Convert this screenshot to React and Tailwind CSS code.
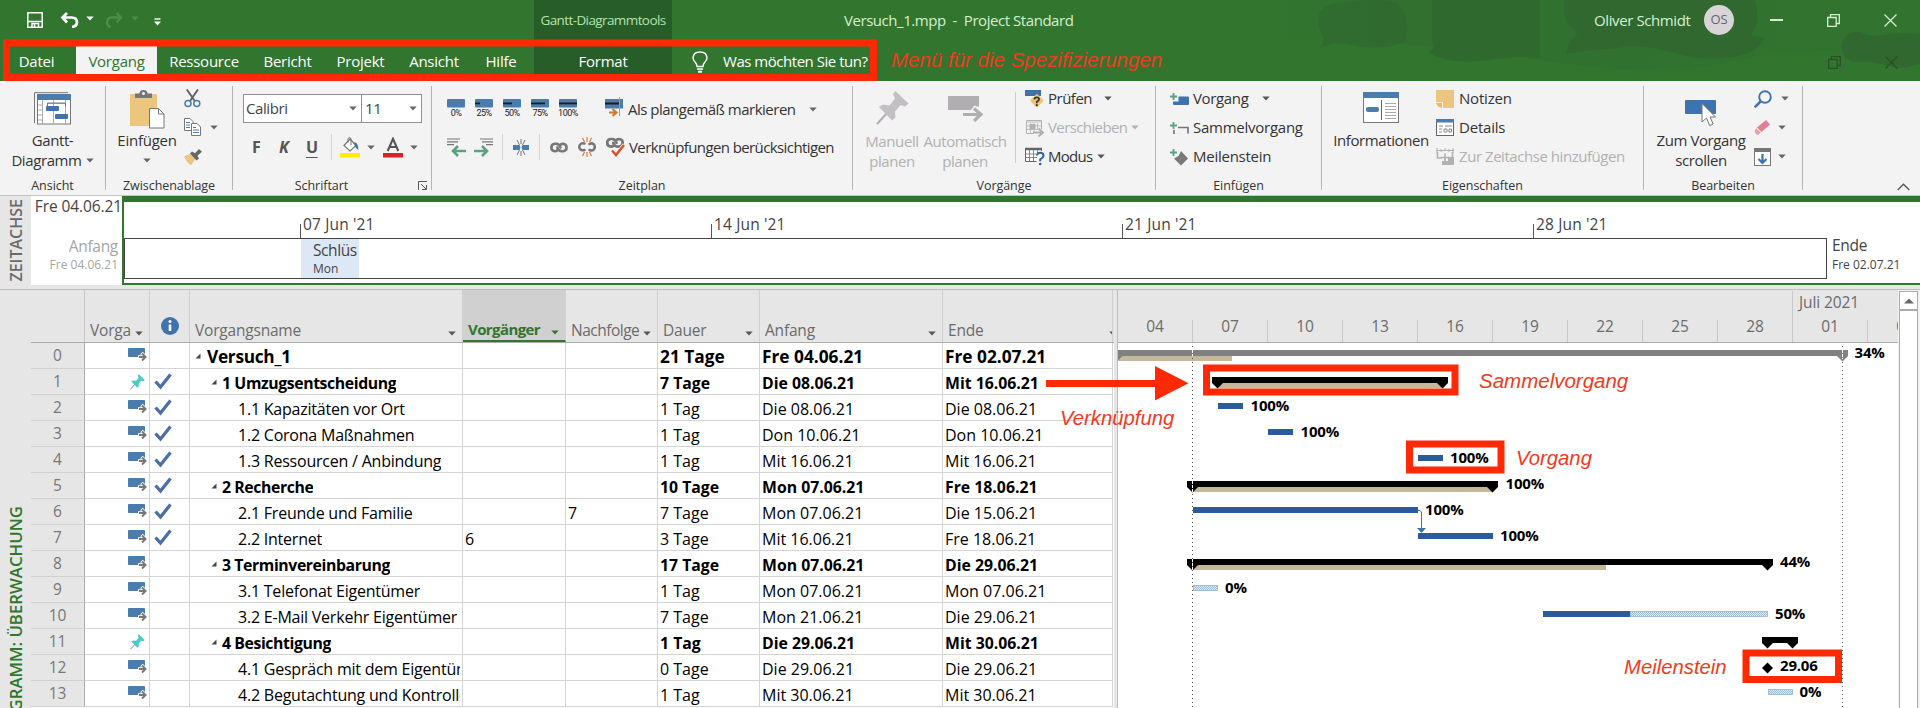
import React from "react";

const UI = "font-['Open_Sans','Noto_Sans',sans-serif]";

/* ---------- small shared pieces ---------- */
function Caret({ className = "", color = "#666" }) {
  return (
    <svg width="8" height="5" viewBox="0 0 8 5" className={"shrink-0 " + className}>
      <path d="M0.3 0.5h7.4L4 4.6z" fill={color} />
    </svg>
  );
}

function Group({ width, label, children }) {
  return (
    <section className={"flex h-[114px] shrink-0 flex-col " + width}>
      <div className="flex h-[94px] shrink-0">{children}</div>
      <div className="h-[20px] text-center text-[12.5px] leading-[21px] tracking-[-0.05px] text-[#333]">{label}</div>
    </section>
  );
}

function Sep() {
  return <div className="mt-[5px] h-[104px] w-px shrink-0 bg-[#b4b4b4]" />;
}

function Item({ icon, children, caret, muted, tight = "tracking-[-0.35px]", gap = "ml-3" }) {
  return (
    <div className={"flex h-[29px] items-center whitespace-nowrap text-[15px] " + (muted ? "text-[#b1b1b1]" : "text-[#333]")}>
      <span className="flex w-[23px] shrink-0">{icon}</span>
      <span className={tight}>{children}</span>
      {caret && <Caret className={gap} color={muted ? "#b1b1b1" : "#555"} />}
    </div>
  );
}

/* ---------- ribbon icons ---------- */
const IconGantt = () => (
  <svg width="37" height="33" viewBox="0 0 37 33">
    <path d="M0.5 31V0.7H34" fill="none" stroke="#777" />
    <rect x="3.5" y="2.5" width="33" height="29.5" fill="#fff" stroke="#777" />
    <rect x="3" y="2" width="34" height="6" fill="#4a7dae" />
    <path d="M4 13h4M4 18h4M4 23h4M4 28h4M8.5 8v24M19.5 8v24M31.5 8v24M14 11.5h18" stroke="#aaa" fill="none" />
    <path d="M13.5 14v-3h18v3" fill="none" stroke="#777" />
    <rect x="12" y="14" width="13" height="5" rx="1" fill="#3f73b0" />
    <rect x="21" y="22" width="13" height="5" rx="1" fill="#3f73b0" />
  </svg>
);
const IconPaste = () => (
  <svg width="35" height="39" viewBox="0 0 35 39">
    <rect x="0" y="4" width="27" height="32" fill="#ecc57e" />
    <path d="M5 8V3.5h4.500Q9.500 0 13.500 0t4 3.500H22V8z" fill="#777" />
    <circle cx="13.500" cy="3.500" r="1.500" fill="#f3f3f3" />
    <path d="M19.500 18.500h9l5.500 5.500v14H19.500z" fill="#fff" stroke="#777" />
    <path d="M28.500 18.500V24H34" fill="none" stroke="#777" />
  </svg>
);
const IconCut = () => (
  <svg width="17" height="19" viewBox="0 0 17 19" fill="none">
    <path d="M2.800 0.500 10.800 12M14 0.500 6 12" stroke="#666" strokeWidth="2" />
    <circle cx="4" cy="14.500" r="3" stroke="#4a7dae" strokeWidth="1.500" />
    <circle cx="12.800" cy="14.500" r="3" stroke="#4a7dae" strokeWidth="1.500" />
  </svg>
);
const IconCopy = () => (
  <svg width="17" height="18" viewBox="0 0 17 18" fill="#fff" stroke="#777">
    <path d="M0.500 0.500h5.500l3 3v9H0.500z" />
    <path d="M2 4.500h4M2 7h4M2 9.500h4" stroke="#4a7dae" />
    <path d="M7.500 5.500h5.500l3.500 3.500v8.500H7.500z" />
    <path d="M9 9.500h3M9 12h6M9 14.500h6" stroke="#4a7dae" />
  </svg>
);
const IconBrush = () => (
  <svg width="18" height="16" viewBox="0 0 18 16">
    <path d="M0 7.500 6 5l5.500 5L7 16Q3 14 0 7.500z" fill="#ecc57e" />
    <path d="M6 4.500 8 2.500l3 1.800L15 0l3 2.800-4.600 4L15 9.500l-2.500 2z" fill="#666" />
  </svg>
);
const IconBucket = () => (
  <svg width="21" height="21" viewBox="0 0 21 21">
    <rect x="0" y="16" width="20" height="4.500" fill="#ffed00" />
    <path d="M4 8.500 10 2l6 6.500-6 5.500z" fill="#fff" stroke="#777" strokeWidth="1.200" />
    <path d="M8 5.500V1.500q1.500-2 3 0V8" fill="none" stroke="#777" />
    <path d="M14.500 5q4 1 3.800 8-2.500-1-3.800-5z" fill="#3f73b0" />
  </svg>
);
const IconFontColor = () => (
  <svg width="20" height="21" viewBox="0 0 20 21">
    <rect x="0" y="16" width="20" height="4.500" fill="#d3242b" />
    <path d="M4.700 14 10 1.800 15.300 14M6.500 10h7" fill="none" stroke="#555" strokeWidth="2.100" />
  </svg>
);
const IconLauncher = () => (
  <svg width="10" height="10" viewBox="0 0 10 10" fill="none" stroke="#555">
    <path d="M0.500 9V0.500H9M3 3l5 5M8.500 4v4.500H4" />
  </svg>
);
function IconPercent({ label, done }) {
  return (
    <span className="flex w-[28px] shrink-0 flex-col">
      <svg width="18" height="9" viewBox="0 0 18 9" className="shrink-0">
        <rect width="18" height="8.500" rx="1" fill="#4a7dae" />
        <rect y="3.500" width={done} height="1.800" fill="#1c1c1c" />
      </svg>
      <span className="flex h-[11px] w-[18px] justify-center font-['Roboto',sans-serif] text-[9px] leading-[11px] tracking-[-0.5px] whitespace-nowrap text-[#222]">{label}</span>
    </span>
  );
}
const IconOnTrack = () => (
  <svg width="19" height="20" viewBox="0 0 19 20">
    <rect y="2" width="18" height="9.500" fill="#4a7dae" />
    <path d="M0 6.500h15" stroke="#1c1c1c" strokeWidth="2" />
    <path d="M14.500 0v19" stroke="#c89468" />
    <path d="M4 15.500h7M7.500 12l4 3.500-4 3.500" fill="none" stroke="#d17a2b" strokeWidth="2.200" />
  </svg>
);
const IconOutdent = () => (
  <svg width="19" height="19" viewBox="0 0 19 19" fill="none">
    <path d="M0 1h13M0 3.800h11M0 6.600h7" stroke="#777" strokeWidth="1.200" />
    <path d="M19 13H6M11 8 6 13l5 5" stroke="#5ba283" strokeWidth="2.600" />
  </svg>
);
const IconIndent = () => (
  <svg width="19" height="19" viewBox="0 0 19 19" fill="none">
    <path d="M6 1h13M8 3.800h11M12 6.600h7" stroke="#777" strokeWidth="1.200" />
    <path d="M0 13h13M8 8l5 5-5 5" stroke="#5ba283" strokeWidth="2.600" />
  </svg>
);
const IconSplit = () => (
  <svg width="16" height="17" viewBox="0 0 16 17">
    <path d="M8 0v5M8 12v5M4 1l2.500 5M12 1 9.500 6M4 16l2.500-5M12 16l-2.500-5" stroke="#777" />
    <path d="M0 6h6.500l1 2.500-1 2.500H0zM16 6H9.500l-1 2.500 1 2.500H16z" fill="#4a7dae" />
  </svg>
);
const ChainPath = () => (
  <g fill="none" stroke="#777" strokeWidth="2.700" strokeLinecap="round">
    <path d="M10.500 5Q9.500 1.200 6 1.200H4.800Q1.200 1.500 1.200 5t3.600 3.800q1.700 0 2.500-.8" />
    <path d="M7.300 5q1 3.800 4.500 3.800h1.400q3.500-.3 3.500-3.800t-3.500-3.800q-1.700 0-2.400.7" />
  </g>
);
const IconLink = () => (
  <svg width="18" height="11" viewBox="-0.200 -0.500 18.400 11"><ChainPath /></svg>
);
const IconUnlink = () => (
  <svg width="18" height="20" viewBox="0 0 18 20">
    <g fill="none" stroke="#777" strokeWidth="2.500" strokeLinecap="round">
      <path d="M6.500 6.500Q3 5.500 1.800 8t.2 4q2 2 4.500 1" />
      <path d="M11.500 13q3.500 1.500 4.700-1t-.2-4.500Q13.500 5.500 11.500 7" />
    </g>
    <path d="M9 0v5M9 15v5M4.500 1l2 4M13.500 1l-2 4M4.500 19l2-4M13.500 19l-2-4" stroke="#df7b3c" strokeWidth="1.200" />
  </svg>
);
const IconRespect = () => (
  <svg width="20" height="20" viewBox="0 0 20 20">
    <g transform="translate(0 0.800)"><ChainPath /></g>
    <path d="M5 13 10 18.500 18.500 8" fill="none" stroke="#f3f3f3" strokeWidth="4.500" />
    <path d="M6 13.500 10 18 18 8" fill="none" stroke="#d9522c" strokeWidth="2.500" />
  </svg>
);
function Pin({ w, h, fill, stem }) {
  return (
    <svg width={w} height={h} viewBox="0 0 33 34">
      <path d="M1 33 13 20" stroke={stem} strokeWidth="2" />
      <path d="M19.500 0 32.500 12.500 29 15.500 24.500 14 19 20.500 19.500 26.500 16 29.500 3 16 7 13.500 13.500 14.500 19 7.500 17 3z" fill={fill} />
    </svg>
  );
}
const IconAuto = () => (
  <svg width="35" height="26" viewBox="0 0 35 26">
    <path d="M0 0h31v10.500h-6v3.500H0z" fill="#b0aeb0" />
    <path d="M14 18.500h17M25 11.500l7.500 7-7.500 7" fill="none" stroke="#f3f3f3" strokeWidth="6" />
    <path d="M15 18.500h17M26 12.500l7 6-7 6.500" fill="none" stroke="#b0aeb0" strokeWidth="3.200" />
  </svg>
);
const IconInspect = () => (
  <svg width="20" height="20" viewBox="0 0 20 20">
    <path d="M0 1h16v6H0z" fill="#3f73b0" />
    <rect x="6.500" y="6.500" width="10" height="10" rx="1.500" transform="rotate(45 11.500 12)" fill="#f0c274" />
    <path d="M9.300 10.300q.3-2 2.500-2t2.300 2q0 1.300-2.300 2.500v1.400" fill="none" stroke="#333" strokeWidth="1.700" />
    <circle cx="11.800" cy="16.200" r="1.100" fill="#333" />
  </svg>
);
const IconMove = () => (
  <svg width="20" height="18" viewBox="0 0 20 18" fill="none" stroke="#b1b1b1">
    <path d="M16.500 10V1.500H1.500v13H9" />
    <path d="M1 3h16M2 7h14M2 10.500h10M5.500 4v10M9 4v10M12.500 4v7" strokeWidth=".8" />
    <rect x="5" y="5.500" width="5" height="4" fill="#b1b1b1" />
    <path d="M8 13.500h9M13.500 9.500l4.500 4-4.500 4" strokeWidth="2" />
  </svg>
);
const IconMode = () => (
  <svg width="20" height="19" viewBox="0 0 20 19" fill="none">
    <path d="M16.500 4V1.500H0.500v13h11" stroke="#666" fill="#fff" />
    <path d="M0 2h17" stroke="#666" strokeWidth="2.500" />
    <path d="M1 7h10M1 10.500h11M4.500 3v11M8.500 3v11M12.500 3v3" stroke="#888" />
    <path d="M12 8.500q.3-2.700 3.200-2.700 3.300 0 3.300 2.800 0 2-3.300 3.700v2" stroke="#35629b" strokeWidth="2" />
    <circle cx="15.200" cy="17" r="1.300" fill="#35629b" />
  </svg>
);
const Plus = () => <path d="M0 4.500h7M3.500 1v7" stroke="#5ba283" strokeWidth="1.800" fill="none" />;
const IconTask = () => (
  <svg width="19" height="14" viewBox="0 0 19 14"><path d="M8.500 4.500H18q1 0 1 1V12q0 1-1 1H4q-1 0-1-1V9.500h5.500z" fill="#3f73b0" /><Plus /></svg>
);
const IconSummary = () => (
  <svg width="19" height="14" viewBox="0 0 19 14"><path d="M8 6.500h10v6M4 9v4" fill="none" stroke="#777" strokeWidth="1.700" /><Plus /></svg>
);
const IconMilestone = () => (
  <svg width="19" height="18" viewBox="0 0 19 18"><path d="M11 3l7 7.500-7 7-7-7L8.500 8z" fill="#7a787a" /><Plus /></svg>
);
const IconInfo = () => (
  <svg width="36" height="31" viewBox="0 0 36 31">
    <rect x="0.500" y="0.500" width="35" height="30" fill="#fff" stroke="#777" />
    <rect width="36" height="6" fill="#4a7dae" />
    <rect x="3" y="15" width="13" height="5" rx="2" fill="#4a7dae" />
    <path d="M18.500 8v20" stroke="#666" />
    <path d="M22 11.500h11M22 14.500h11M22 17.500h11M22 20.500h11M22 23.500h11M22 26.500h11" stroke="#aaa" />
  </svg>
);
const IconNote = () => (
  <svg width="18" height="18" viewBox="0 0 18 18">
    <path d="M0 0h18v18H7v-6H0z" fill="#ecc57e" />
    <path d="M0 13h6v5q-5-1-6-5z" fill="#f1b95a" />
  </svg>
);
const IconDetails = () => (
  <svg width="18" height="17" viewBox="0 0 18 17">
    <rect x="0.500" y="0.500" width="17" height="16" fill="#fff" stroke="#666" />
    <rect width="18" height="3.500" fill="#4a7dae" />
    <path d="M3 7h4M9 7h7M3 10h3M3 13h3M8 10h3v3H8zM13 10h2.500v3H13z" fill="none" stroke="#888" />
  </svg>
);
const IconTimeline = () => (
  <svg width="18" height="17" viewBox="0 0 18 17" fill="none" stroke="#b1b1b1">
    <path d="M0 2.500h18M1 0v5M5 1v3M9 0v3M13 1v3M17 0v5" />
    <path d="M1.500 4v6H6M16.500 4v5M5 9.500h8M9 5.500V13" strokeWidth="1.600" />
    <path d="M12 9h6v8H6v-4h6z" fill="#b1b1b1" stroke="none" />
  </svg>
);
const IconScroll = () => (
  <svg width="32" height="27" viewBox="0 0 32 27">
    <rect width="31" height="14" rx="1" fill="#3f73b0" />
    <path d="M17 3.500v18.500l4.500-4 3.200 7.500 3.500-1.500-3.200-7h5.500z" fill="#fff" stroke="#777" />
  </svg>
);
const IconFind = () => (
  <svg width="18" height="18" viewBox="0 0 18 18" fill="none" stroke="#3f73b0">
    <circle cx="11" cy="7" r="5.800" strokeWidth="1.900" />
    <path d="M7 11 0.800 17.200" strokeWidth="2.600" />
  </svg>
);
const IconErase = () => (
  <svg width="18" height="16" viewBox="0 0 18 16">
    <path d="M12 0l4 4.500-8.500 7.500-4.500-4.500z" fill="#e07f90" />
    <path d="M2.300 8.300 6.700 12.600 4 15Q1 14 0.500 11z" fill="#e8a0ac" />
  </svg>
);
const IconFill = () => (
  <svg width="17" height="18" viewBox="0 0 17 18">
    <rect x="0.500" y="0.500" width="16" height="17" fill="#fff" stroke="#777" />
    <rect width="17" height="4" fill="#777" />
    <path d="M8.500 6v9M4.500 11l4 4 4-4" fill="none" stroke="#3f73b0" strokeWidth="2.200" />
  </svg>
);

/* ---------- title bar and tabs ---------- */
const TABS = [
  ["Datei", "w-[76px] pr-[3px]", ""],
  ["Vorgang", "w-[81px]", "bg-[#f3f3f3] text-[#31752f]"],
  ["Ressource", "w-[94px]", ""],
  ["Bericht", "w-[73px]", ""],
  ["Projekt", "w-[73px]", ""],
  ["Ansicht", "w-[74px]", ""],
  ["Hilfe", "w-[63px] pr-[3px]", ""],
  ["Format", "w-[138px]", ""],
];

function Restore({ color }) {
  return (
    <svg width="13" height="13" viewBox="0 0 13 13" fill="none" stroke={color} strokeWidth="1.300">
      <path d="M0.700 3.500h8.500v8.800H0.700zM3.500 3.500V0.700h8.800v8.800H9.500" />
    </svg>
  );
}
function Cross({ color }) {
  return (
    <svg width="13" height="13" viewBox="0 0 13 13" stroke={color} strokeWidth="1.300">
      <path d="M0.500 0.500l12 12M12.500 0.500l-12 12" />
    </svg>
  );
}

function TitleBar() {
  return (
    <header className="relative h-[81px] shrink-0 overflow-hidden bg-[#31752f]">
      <svg className="absolute top-0 right-0" width="640" height="81" viewBox="1280 0 640 81">
        <defs>
          <linearGradient id="shade" x1="0" y1="0" x2="1" y2="0">
            <stop offset="0" stopColor="#31752f" />
            <stop offset=".2" stopColor="#31702f" />
            <stop offset="1" stopColor="#31732f" />
          </linearGradient>
        </defs>
        <path d="M1280 0h640v60q-100-20-180 0t-200 0-260-20z" fill="url(#shade)" />
        <g fill="#30682f">
          <path d="M1328 5q40-8 68-3 14 10 10 40-30 10-60 2-15-2-26 4 6-10 2-14-10-20 6-29z" opacity=".7" />
          <path d="M1432 0h108v58q-30-2-50 2-40 6-62-8 8-2 4-12z" opacity=".9" />
          <path d="M1565 0h190q6 20-4 36 12 0 13 2-6 14-26 18-30 6-60-2-40-12-60-6-30 2-52 6 2-14 12-20-18-14-13-34z" />
          <path d="M1842 44q4-14 18-12 8 4 16 4 24-4 44-2v30q-14 4-24 4-24-8-44-6-12-6-10-18z" />
        </g>
      </svg>
      <div className="relative flex h-[40px] text-[15px] text-[#d5f0d0]">
        <div className="flex w-[534px] items-center pl-[27px]">
          <svg width="16" height="16" viewBox="0 0 16 16" fill="none" stroke="#fff" strokeWidth="1.500" className="mb-px">
            <path d="M0.800 0.800h14.400v14.400H0.800zM1 9.500h14" />
            <path d="M5 15v-3.500h6.500V15M7.500 12v3" />
          </svg>
          <svg width="19" height="16" viewBox="0 0 19 16" fill="none" stroke="#fff" strokeWidth="2.700" className="ml-[17px]">
            <path d="M7 1 2.500 5.500l4.500 5M3 5.500h8.500q5.500 0 5.500 5-.5 4-5 4.500" />
          </svg>
          <Caret className="mb-1 ml-[7px]" color="#fff" />
          <svg width="18" height="16" viewBox="0 0 18 16" fill="none" stroke="#4d8e4b" strokeWidth="2.300" className="ml-[11px]">
            <path d="M11.500 1 16 5.500l-4.500 5M15.500 5.500H7q-5 0-5 5 .5 4 4 4.500" />
          </svg>
          <Caret className="mb-1 ml-[8px]" color="#4d8e4b" />
          <svg width="7" height="8" viewBox="0 0 7 8" className="mt-1 ml-[15px]">
            <path d="M0.500 1h6" stroke="#fff" strokeWidth="1.400" />
            <path d="M0 3.500h7L3.500 7.500z" fill="#fff" />
          </svg>
        </div>
        <div className="flex w-[138px] items-center justify-center bg-[#275d28] text-[13.5px] tracking-[-0.6px] text-[#b5e2ac]">Gantt-Diagrammtools</div>
        <div className="flex w-[570px] items-center pl-[172px] tracking-[-0.45px] whitespace-pre">Versuch_1.mpp  -  Project Standard</div>
        <div className="flex flex-1 items-center">
          <span className="ml-[352px] w-[98px] tracking-[-0.4px] whitespace-nowrap">Oliver Schmidt</span>
          <span className="ml-[12px] flex h-[30px] w-[30px] items-center justify-center rounded-full bg-[#d8d5d8] text-[13px] text-[#666]">OS</span>
          <span className="ml-[36px] h-[1.500px] w-[13px] bg-[#d5f0d0]" />
          <span className="ml-[44px]"><Restore color="#d5f0d0" /></span>
          <span className="ml-[44px]"><Cross color="#d5f0d0" /></span>
        </div>
      </div>
      <nav className="relative flex h-[41px] text-[15px] text-white">
        {TABS.map(([t, w, c]) => (
          <div key={t} className={"flex shrink-0 " + w + (t === "Format" ? " bg-[#275d28]" : "")}>
            <span className={"mt-[5px] flex w-full items-center justify-center pb-[4px] tracking-[-0.25px] " + c}>{t}</span>
          </div>
        ))}
        <svg width="16" height="22" viewBox="0 0 16 22" fill="none" stroke="#fff" strokeWidth="1.400" className="mt-[11px] ml-[20px]">
          <path d="M5 15.500q0-2.500-2-4.500-2-2-2-4.200Q1.500 1 8 1t7 5.800q0 2.200-2 4.200-2 2-2 4.500zM5 18h6" />
          <path d="M6 20.700h4" strokeWidth="2" />
        </svg>
        <span className="mt-[10px] ml-[15px] w-[148px] leading-[22px] tracking-[-0.47px] whitespace-nowrap">Was möchten Sie tun?</span>
        <span className="mt-[16px] ml-[957px]"><Restore color="#2b4f2a" /></span>
        <span className="mt-[16px] ml-[44px]"><Cross color="#2b4f2a" /></span>
      </nav>
    </header>
  );
}

/* ---------- ribbon ---------- */
function Ribbon() {
  return (
    <div className="flex h-[115px] shrink-0 border-b border-[#c6c6c6] bg-[#f3f3f3] text-[15px] tracking-[-0.4px] text-[#333]">
      <Group width="w-[105px]" label="Ansicht">
        <div className="flex w-full flex-col items-center pt-[11px] leading-[20px]">
          <IconGantt />
          <span className="mt-[5px]">Gantt-</span>
          <span className="flex items-center gap-[4px]">Diagramm <Caret /></span>
        </div>
      </Group>
      <Sep />
      <Group width="w-[126px]" label="Zwischenablage">
        <div className="ml-[11px] flex w-[60px] flex-col items-center pt-[9px] leading-[20px] tracking-[-0.25px]">
          <IconPaste />
          <span className="mt-px">Einfügen</span>
          <Caret className="mt-[8px]" />
        </div>
        <div className="ml-[7px] flex flex-col pt-[8px]">
          <IconCut />
          <span className="mt-[10px] flex items-center gap-[9px]"><IconCopy /><Caret /></span>
          <span className="mt-[13px]"><IconBrush /></span>
        </div>
      </Group>
      <Sep />
      <Group width="w-[198px]" label={<span className="flex"><span className="w-[177px]">Schriftart</span><span className="mt-[6px] ml-[8px]"><IconLauncher /></span></span>}>
        <div className="flex flex-col pl-[10px]">
          <div className="mt-[13px] flex h-[29px] w-[179px] border border-[#919191] bg-white leading-[27px] text-[#444]">
            <div className="flex w-[118px] items-center justify-between border-r border-[#919191] pr-[4px] pl-[2px]">Calibri<Caret /></div>
            <div className="flex flex-1 items-center justify-between pr-[4px] pl-[3px]">11<Caret /></div>
          </div>
          <div className="mt-[11px] flex h-[26px] items-center text-[16px] font-bold text-[#555]">
            <span className="w-[32px] pl-[9px]">F</span>
            <span className="w-[28px] pl-[4px] italic">K</span>
            <span className="w-[28px] pl-[3px] underline underline-offset-4">U</span>
            <span className="mr-[8px] h-[26px] w-px bg-[#d4d4d4]" />
            <IconBucket />
            <Caret className="mr-[8px] ml-[6px]" />
            <IconFontColor />
            <Caret className="ml-[7px]" />
          </div>
        </div>
      </Group>
      <Sep />
      <Group width="w-[420px]" label="Zeitplan">
        <div className="flex flex-col pl-[15px]">
          <div className="flex h-[41px] pt-[18px]">
            <IconPercent label="0%" done={0} />
            <IconPercent label="25%" done={5} />
            <IconPercent label="50%" done={9} />
            <IconPercent label="75%" done={14} />
            <IconPercent label="100%" done={18} />
            <span className="-mt-[3px] ml-[18px] flex h-[26px] w-[23px] pt-px"><IconOnTrack /></span>
            <span className="-mt-[3px] w-[177px] leading-[26px] tracking-[-0.5px] whitespace-nowrap">Als plangemäß markieren</span>
            <Caret className="mt-[8px] ml-[4px]" />
          </div>
          <div className="mt-[12px] flex h-[26px] items-center">
            <IconOutdent />
            <span className="ml-[8px]"><IconIndent /></span>
            <span className="ml-[9px] h-[26px] w-px bg-[#d4d4d4]" />
            <span className="ml-[10px]"><IconSplit /></span>
            <span className="ml-[10px] h-[26px] w-px bg-[#d4d4d4]" />
            <span className="ml-[10px]"><IconLink /></span>
            <span className="ml-[10px]"><IconUnlink /></span>
            <span className="ml-[10px]"><IconRespect /></span>
            <span className="ml-[3px] tracking-[-0.6px] whitespace-nowrap">Verknüpfungen berücksichtigen</span>
          </div>
        </div>
      </Group>
      <Sep />
      <Group width="w-[302px]" label="Vorgänge">
        <div className="ml-[6px] flex w-[66px] flex-col items-center pt-[10px] text-center leading-[20px] text-[#b1b1b1]">
          <Pin w={33} h={34} fill="#c2c0c2" stem="#b0aeb0" />
          <span className="mt-[6px]">Manuell</span>
          <span>planen</span>
        </div>
        <div className="flex w-[80px] flex-col items-center pt-[15px] text-center leading-[20px] tracking-[-0.45px] text-[#b1b1b1]">
          <IconAuto />
          <span className="mt-[9px]">Automatisch</span>
          <span>planen</span>
        </div>
        <div className="mt-[11px] ml-[10px] h-[71px] w-px bg-[#cfcfcf]" />
        <div className="ml-[9px] flex flex-col pt-[3px]">
          <Item icon={<IconInspect />} caret tight="tracking-[-0.5px]">Prüfen</Item>
          <Item icon={<IconMove />} caret muted gap="ml-1" tight="tracking-[-0.6px]">Verschieben</Item>
          <Item icon={<IconMode />} caret gap="ml-1" tight="tracking-[-0.7px]">Modus</Item>
        </div>
      </Group>
      <Sep />
      <Group width="w-[165px]" label="Einfügen">
        <div className="ml-[14px] flex flex-col pt-[3px]">
          <Item icon={<IconTask />} caret gap="ml-[14px]">Vorgang</Item>
          <Item icon={<IconSummary />} tight="tracking-[-0.25px]">Sammelvorgang</Item>
          <Item icon={<IconMilestone />} tight="tracking-[-0.25px]">Meilenstein</Item>
        </div>
      </Group>
      <Sep />
      <Group width="w-[321px]" label="Eigenschaften">
        <div className="ml-[12px] flex w-[94px] flex-col items-center pt-[11px] leading-[20px]">
          <IconInfo />
          <span className="mt-[7px]">Informationen</span>
        </div>
        <div className="ml-[8px] flex flex-col pt-[3px]">
          <Item icon={<IconNote />} tight="tracking-[-0.2px]">Notizen</Item>
          <Item icon={<IconDetails />} tight="tracking-[-0.2px]">Details</Item>
          <Item icon={<IconTimeline />} muted tight="tracking-[-0.45px]">Zur Zeitachse hinzufügen</Item>
        </div>
      </Group>
      <Sep />
      <Group width="w-[158px]" label="Bearbeiten">
        <div className="ml-[11px] flex w-[92px] flex-col items-center pt-[19px] text-center leading-[20px]">
          <IconScroll />
          <span className="mt-[3px] whitespace-nowrap">Zum Vorgang</span>
          <span>scrollen</span>
        </div>
        <div className="ml-[7px] flex flex-col pt-[3px]">
          <span className="flex h-[29px] items-center gap-[9px]"><IconFind /><Caret /></span>
          <span className="flex h-[29px] items-center gap-[6px]"><IconErase /><Caret /></span>
          <span className="flex h-[29px] items-center gap-[7px]"><IconFill /><Caret /></span>
        </div>
      </Group>
      <Sep />
      <svg width="13" height="8" viewBox="0 0 13 8" className="mt-[102px] ml-[94px]" fill="none" stroke="#555" strokeWidth="1.300">
        <path d="M0.700 7 6.500 1.200 12.300 7" />
      </svg>
    </div>
  );
}

/* ---------- timeline ---------- */
function Timeline() {
  return (
    <div className="flex h-[94px] shrink-0 border-b border-[#bdbdbd] bg-[#e6e6e6]">
      <div className="flex h-[89px] w-[31px] shrink-0 items-center justify-center">
        <span className="rotate-180 text-[16px] leading-[22px] font-semibold text-[#6a6a6a] [writing-mode:vertical-rl]">ZEITACHSE</span>
      </div>
      <div className="flex h-[89px] w-[91px] shrink-0 flex-col items-end bg-white whitespace-nowrap">
        <span className="text-[15.5px] leading-[20px] tracking-[-0.1px] text-[#444]">Fre 04.06.21</span>
        <span className="mt-[20px] pr-[4px] text-[15.5px] leading-[20px] tracking-[-0.3px] text-[#a5a5a5]">Anfang</span>
        <span className="pr-[4px] text-[12px] leading-[18px] text-[#a5a5a5]">Fre 04.06.21</span>
      </div>
      <div className="flex h-[89px] min-w-0 flex-1 flex-col overflow-hidden border-t-[6px] border-b-2 border-l-2 border-[#31752f] bg-white">
        <div className="flex h-[36px] items-end pl-[176px] text-[15.5px] text-[#444]">
          {["07 Jun '21", "14 Jun '21", "21 Jun '21", "28 Jun '21"].map((d) => (
            <span key={d} className="flex w-[411px] shrink-0 items-end">
              <span className="h-[14px] w-px bg-[#555]" />
              <span className="pb-[4px] pl-[2px] leading-[20px] tracking-[0.15px]">{d}</span>
            </span>
          ))}
        </div>
        <div className="flex h-[41px]">
          <div className="flex w-[1703px] shrink-0 border border-[#444] pl-[176px]">
            <div className="flex w-[58px] flex-col bg-[#dde8f6] pl-[12px] text-[#444]">
              <span className="mt-[1px] text-[15.5px] leading-[20px] tracking-[-0.4px]">Schlüs</span>
              <span className="text-[12px] leading-[17px]">Mon</span>
            </div>
          </div>
          <div className="flex flex-col pl-[5px] whitespace-nowrap text-[#444]">
            <span className="-mt-[3px] text-[15.500px] leading-[20px] tracking-[-0.3px]">Ende</span>
            <span className="text-[12px] leading-[20px]">Fre 02.07.21</span>
          </div>
        </div>
      </div>
    </div>
  );
}

/* ---------- task table ---------- */
const TASKS = [
  [0, "auto", 0, 0, "Versuch_1", "", "", "21 Tage", "Fre 04.06.21", "Fre 02.07.21"],
  [1, "pin", 1, 1, "1 Umzugsentscheidung", "", "", "7 Tage", "Die 08.06.21", "Mit 16.06.21"],
  [2, "auto", 1, 2, "1.1 Kapazitäten vor Ort", "", "", "1 Tag", "Die 08.06.21", "Die 08.06.21"],
  [3, "auto", 1, 2, "1.2 Corona Maßnahmen", "", "", "1 Tag", "Don 10.06.21", "Don 10.06.21"],
  [4, "auto", 1, 2, "1.3 Ressourcen / Anbindung", "", "", "1 Tag", "Mit 16.06.21", "Mit 16.06.21"],
  [5, "auto", 1, 1, "2 Recherche", "", "", "10 Tage", "Mon 07.06.21", "Fre 18.06.21"],
  [6, "auto", 1, 2, "2.1 Freunde und Familie", "", "7", "7 Tage", "Mon 07.06.21", "Die 15.06.21"],
  [7, "auto", 1, 2, "2.2 Internet", "6", "", "3 Tage", "Mit 16.06.21", "Fre 18.06.21"],
  [8, "auto", 0, 1, "3 Terminvereinbarung", "", "", "17 Tage", "Mon 07.06.21", "Die 29.06.21"],
  [9, "auto", 0, 2, "3.1 Telefonat Eigentümer", "", "", "1 Tag", "Mon 07.06.21", "Mon 07.06.21"],
  [10, "auto", 0, 2, "3.2 E-Mail Verkehr Eigentümer", "", "", "7 Tage", "Mon 21.06.21", "Die 29.06.21"],
  [11, "pin", 0, 1, "4 Besichtigung", "", "", "1 Tag", "Die 29.06.21", "Mit 30.06.21"],
  [12, "auto", 0, 2, "4.1 Gespräch mit dem Eigentümer", "", "", "0 Tage", "Die 29.06.21", "Die 29.06.21"],
  [13, "auto", 0, 2, "4.2 Begutachtung und Kontrolle", "", "", "1 Tag", "Mit 30.06.21", "Mit 30.06.21"],
];

const AutoIcon = () => (
  <svg width="19" height="13" viewBox="0 0 19 13">
    <rect width="17" height="9" rx="0.800" fill="#4a7dae" />
    <path d="M10 9h7M13.500 5l4 4-4 4" fill="none" stroke="#fff" strokeWidth="3.500" />
    <path d="M11 9h6M14 5.500l3.500 3.500-3.500 3.500" fill="none" stroke="#777" strokeWidth="2" />
  </svg>
);
const Check = () => (
  <svg width="18" height="17" viewBox="0 0 18 17">
    <path d="M1.500 8.500 6.500 14 16.500 1.500" fill="none" stroke="#4c6ea8" strokeWidth="3.300" />
  </svg>
);
const Collapse = () => (
  <svg width="6" height="6" viewBox="0 0 6 6" className="shrink-0"><path d="M5.500 0.500v5H0.500z" fill="#444" /></svg>
);

function HeadCell({ w, children, caret = true, active, className = "" }) {
  return (
    <div className={"flex h-full shrink-0 items-end border-r border-[#d0d0d0] pr-[6px] pl-[5px] " + w + (active ? " border-b-2 border-b-[#31752f] bg-[#d0d0d0] pb-px text-[15px] font-bold tracking-[-0.6px] text-[#31752f]" : " pb-[2px]")}>
      <span className={"min-w-0 flex-1 leading-[20px] whitespace-nowrap " + className}>{children}</span>
      {caret && <Caret className="mb-[4px]" color={active ? "#31752f" : "#555"} />}
    </div>
  );
}

function TaskRow({ task }) {
  const [id, mode, done, level, name, pred, succ, dur, start, end] = task;
  const font = level === 0 ? " text-[17.3px] leading-[27px] font-bold" : level === 1 ? " font-bold text-[15.8px] leading-[28px]" : " text-[16px] leading-[28px]";
  const nameFont = level === 0 ? " ml-[6px] tracking-[-0.3px]" : level === 1 ? " ml-[5px] tracking-[-0.4px]" : " tracking-[-0.22px]";
  const pad = level === 0 ? " pl-[5px]" : level === 1 ? " pl-[21px]" : " pl-[48px]";
  const cell = "h-full shrink-0 overflow-hidden border-r border-b border-[#d4d4d4] pl-[2px] whitespace-nowrap ";
  return (
    <div className={"flex h-[26px] shrink-0 text-black" + font}>
      <div className="w-[54px] shrink-0 border-r border-b border-r-[#ababab] border-b-[#d0d0d0] bg-[#e6e6e6] text-center text-[15.500px] leading-[25px] font-normal text-[#777]">{id}</div>
      <div className={cell + "flex w-[65px] justify-end pt-[5px] pr-[2px]"}>
        {mode === "auto" ? <AutoIcon /> : <span className="mr-[2px]"><Pin w={15} h={16} fill="#4cc9c9" stem="#777" /></span>}
      </div>
      <div className={cell + "w-[40px] pt-[4px] !pl-[4px]"}>{done ? <Check /> : null}</div>
      <div className={"flex h-full w-[273px] shrink-0 items-start overflow-hidden border-r border-b border-[#d4d4d4] pr-[2px]" + pad}>
        {level < 2 && <span className="flex h-[25px] shrink-0 items-center"><Collapse /></span>}
        <span className={"overflow-hidden whitespace-nowrap" + nameFont}>{name}</span>
      </div>
      <div className={cell + "w-[103px]"}>{pred}</div>
      <div className={cell + "w-[92px]"}>{succ}</div>
      <div className={cell + "w-[102px]"}>{dur}</div>
      <div className={cell + "w-[183px]"}>{start}</div>
      <div className={cell + "w-[170px]"}>{end}</div>
    </div>
  );
}

function TaskTable() {
  return (
    <div className="flex w-[1083px] shrink-0 flex-col bg-white">
      <div className="flex h-[53px] shrink-0 border-b border-[#ababab] bg-[#e6e6e6] text-[15.5px] tracking-[-0.2px] text-[#6b6b6b]">
        <div className="w-[54px] shrink-0 border-r border-[#c6c6c6]" />
        <HeadCell w="w-[65px]">Vorga</HeadCell>
        <div className="flex w-[40px] shrink-0 justify-center border-r border-[#d0d0d0] pt-[27px]">
          <svg width="18" height="18" viewBox="0 0 18 18">
            <circle cx="9" cy="9" r="9" fill="#3f73b0" />
            <path d="M9 7.500V14" stroke="#fff" strokeWidth="2.600" />
            <circle cx="9" cy="4.500" r="1.500" fill="#fff" />
          </svg>
        </div>
        <HeadCell w="w-[273px]">Vorgangsname</HeadCell>
        <HeadCell w="w-[103px]" active>Vorgänger</HeadCell>
        <HeadCell w="w-[92px]" className="tracking-[-0.5px]">Nachfolge</HeadCell>
        <HeadCell w="w-[102px]">Dauer</HeadCell>
        <HeadCell w="w-[183px]">Anfang</HeadCell>
        <div className="flex h-full w-[170px] shrink-0 items-end overflow-hidden border-r border-[#d0d0d0] pb-[2px] pl-[5px]">
          <span className="w-[161px] shrink-0 leading-[20px]">Ende</span>
          <Caret className="mb-[4px]" color="#555" />
        </div>
      </div>
      {TASKS.map((t) => <TaskRow key={t[0]} task={t} />)}
    </div>
  );
}

/* ---------- gantt chart ---------- */
function Summary({ x1, x2, y, progress, color = "#000", left = true }) {
  const tip = (c) => `M${c - 5.500} ${y}h11v6l-5.500 5.500-5.500-5.500z`;
  return (
    <g>
      {progress && <rect x={left ? x1 + 5.500 : x1} y={y + 6} width={progress - x1 - (left ? 5.500 : 0)} height="5" fill="#c4b89a" />}
      <rect x={x1} y={y} width={x2 - x1} height="6" fill={color} />
      {left ? <path d={tip(x1 + 5.500)} fill={color} /> : <path d={`M${x1} ${y}v10.500l5-5z`} fill={color} />}
      <path d={tip(x2 - 5.500)} fill={color} />
    </g>
  );
}
const Bar = ({ x1, x2, y }) => <rect x={x1} y={y} width={x2 - x1} height="6" fill="#2a5c9c" />;
const Open = ({ x1, x2, y }) => <rect x={x1 + 0.500} y={y + 0.500} width={x2 - x1 - 1} height="5" fill="url(#hatch)" stroke="#8fb3d3" strokeWidth=".8" />;

const LABELS = [
  [1854.500, 358, "34%"], [1250.500, 411, "100%"], [1300.500, 437, "100%"], [1450, 463, "100%"],
  [1505.500, 489, "100%"], [1425, 515, "100%"], [1500, 541, "100%"], [1780, 567, "44%"],
  [1225, 593, "0%"], [1775, 619, "50%"], [1780, 671, "29.06"], [1799.500, 697, "0%"],
];

function Chart() {
  return (
    <svg width="781" height="365" viewBox="1118 343 781 365" className="shrink-0 bg-white">
      <defs>
        <pattern id="hatch" width="2" height="2" patternUnits="userSpaceOnUse">
          <rect width="2" height="2" fill="#dfeaf2" />
          <rect width="1" height="1" fill="#9dbdd6" />
          <rect x="1" y="1" width="1" height="1" fill="#9dbdd6" />
        </pattern>
      </defs>
      <Summary x1={1118} x2={1848} y={350} progress={1232} color="#808080" left={false} />
      <Summary x1={1212} x2={1448} y={377} progress={1443} />
      <Bar x1={1218} x2={1243} y={403} />
      <Bar x1={1268} x2={1293} y={429} />
      <Bar x1={1418} x2={1443} y={455} />
      <Summary x1={1187} x2={1498} y={481} progress={1493} />
      <Bar x1={1193} x2={1418} y={507} />
      <path d="M1418 510.500h2l1.500 1.500v18" fill="none" stroke="#3a74ae" />
      <path d="M1417 528h9l-4.500 5z" fill="#3a74ae" />
      <Bar x1={1418} x2={1493} y={533} />
      <Summary x1={1187} x2={1773} y={559} progress={1606} />
      <Open x1={1193} x2={1218} y={585} />
      <Bar x1={1543} x2={1630} y={611} />
      <Open x1={1630} x2={1768} y={611} />
      <Summary x1={1762} x2={1798} y={637} />
      <path d="M1767.500 662.500l5.500 5.500-5.500 5.500-5.500-5.500z" fill="#000" />
      <Open x1={1768} x2={1793} y={689} />
      <g strokeDasharray="1 3">
        <path d="M1192.500 346v362M1842.500 346v362" stroke="#555" />
        <path d="M1192.500 350v6M1192.500 481v11M1192.500 559v11M1842.500 350v9" stroke="#fff" strokeDasharray="3 1" />
      </g>
      {LABELS.map(([x, y, t]) => (
        <text key={x + t} x={x} y={y} className="font-['Open_Sans','Noto_Sans',sans-serif] text-[15px] font-bold tracking-[-0.2px]">{t}</text>
      ))}
    </svg>
  );
}

function GanttPane() {
  return (
    <div className="flex w-[781px] shrink-0 flex-col overflow-hidden border-l border-[#bdbdbd]">
      <div className="flex h-[53px] shrink-0 border-b border-[#ababab] bg-[#e6e6e6] text-[15.5px] text-[#6b6b6b]">
        {["04", "07", "10", "13", "16", "19", "22", "25", "28", "01", "04"].map((d, i) => (
          <div key={i} className={"flex h-full shrink-0 flex-col justify-end " + (i === 0 ? "w-[74px]" : "w-[75px]")}>
            {i === 9 && <div className="h-[29px] border-l border-[#c8c8c8] pl-[6px] leading-[22px] whitespace-nowrap tracking-[-0.1px]">Juli 2021</div>}
            <div className={"h-[22px] text-center leading-[13px] " + (i > 0 ? "border-l border-[#c8c8c8]" : "")}>{d}</div>
          </div>
        ))}
      </div>
      <Chart />
    </div>
  );
}

function Scrollbar() {
  return (
    <div className="flex flex-1 flex-col bg-[#f3f3f3] pt-px pl-px">
      <div className="flex w-[19px] flex-1 flex-col border border-b-0 border-[#ababab] bg-white">
        <div className="flex h-[19px] items-center justify-center border-b-2 border-[#ababab]">
          <svg width="10" height="6" viewBox="0 0 10 6"><path d="M0 5.500 5 0.500l5 5z" fill="#666" /></svg>
        </div>
      </div>
    </div>
  );
}

/* ---------- red annotations laid over the window ---------- */
const NOTES = [
  [891, 66.500, "Menü für die Spezifizierungen", "text-[20.5px]"],
  [1479, 387.500, "Sammelvorgang", "text-[20.500px]"],
  [1516, 464.500, "Vorgang", "text-[20.3px]"],
  [1624, 673.500, "Meilenstein", "text-[20.3px]"],
  [1060, 425, "Verknüpfung", "text-[20.3px]"],
];
function Annotations() {
  return (
    <svg className="pointer-events-none absolute top-0 left-0" width="1920" height="708" viewBox="0 0 1920 708">
      <g fill="none" stroke="#ff2a05" strokeWidth="7">
        <rect x="6.500" y="43" width="867" height="34.500" />
        <rect x="1206.500" y="368" width="248.500" height="24" />
        <rect x="1409.500" y="444" width="91.500" height="26" />
        <rect x="1746" y="653" width="92.500" height="26.500" />
      </g>
      <path d="M1046 380h109v-14l33.500 17.200-33.500 17.300V387h-109z" fill="#ff2a05" />
      {NOTES.map(([x, y, t, c]) => (
        <text key={t} x={x} y={y} fill="#f03a20" className={"font-['Liberation_Sans',sans-serif] italic " + c}>{t}</text>
      ))}
    </svg>
  );
}

export default function App() {
  return (
    <div className={"relative flex h-[708px] w-[1920px] flex-col overflow-hidden bg-[#e6e6e6] " + UI}>
      <TitleBar />
      <Ribbon />
      <Timeline />
      <main className="flex min-h-0 flex-1 overflow-hidden">
        <div className="flex w-[31px] shrink-0 justify-center overflow-hidden pt-[216px]">
          <span className="h-fit shrink-0 rotate-180 text-[16.8px] leading-[22px] font-semibold whitespace-nowrap text-[#31752f] [writing-mode:vertical-rl]">GRAMM: ÜBERWACHUNG</span>
        </div>
        <TaskTable />
        <div className="w-[3px] shrink-0 bg-[#e6e6e6]" />
        <GanttPane />
        <Scrollbar />
      </main>
      <Annotations />
    </div>
  );
}
